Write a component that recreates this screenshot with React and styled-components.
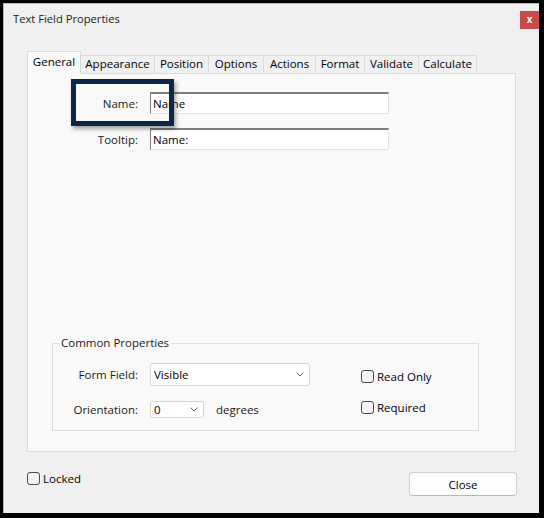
import styled, { createGlobalStyle } from 'styled-components';

const GlobalStyle = createGlobalStyle`
  html, body {
    margin: 0;
    padding: 0;
    background: #000;
  }
  body {
    font-family: "Open Sans", "Noto Sans", "Liberation Sans", sans-serif;
    font-size: 11.5px;
    color: #1a1a1a;
  }
`;

const TABS = [
  { label: 'General', width: 54 },
  { label: 'Appearance', width: 74 },
  { label: 'Position', width: 54 },
  { label: 'Options', width: 55 },
  { label: 'Actions', width: 52 },
  { label: 'Format', width: 49 },
  { label: 'Validate', width: 54 },
  { label: 'Calculate', width: 58 },
];

const Dialog = styled.div`
  margin: 3px 0 0 3px;
  width: 536px;
  height: 510px;
  background: #f0f0f0;
  box-sizing: border-box;
  border-left: 1px solid #b8b8b8;
  border-top: 1px solid #b8b8b8;
  display: flex;
  flex-direction: column;
`;

const TitleBar = styled.div`
  height: 31px;
  display: flex;
  justify-content: space-between;
  align-items: flex-start;
  padding-left: 9px;
`;

const Title = styled.span`
  font-size: 11.2px;
  line-height: 30px;
  color: #222;
`;

const CloseX = styled.button`
  margin-top: 7px;
  width: 19px;
  height: 18px;
  border: none;
  padding: 0;
  background: #c94c4c;
  color: #fff;
  font-family: "Liberation Sans", sans-serif;
  font-size: 10px;
  font-weight: bold;
  line-height: 18px;
`;

const Body = styled.div`
  padding: 16px 23px 0 23px;
`;

const TabRow = styled.div`
  display: flex;
  align-items: flex-end;
  height: 22px;
`;

const Tab = styled.div`
  width: ${({ $width }) => $width}px;
  height: ${({ $active }) => ($active ? 23 : 18)}px;
  box-sizing: border-box;
  display: flex;
  align-items: center;
  justify-content: center;
  background: ${({ $active }) => ($active ? '#f9f9f9' : '#f0f0f0')};
  border: 1px solid #dadada;
  border-bottom: none;
  border-left: ${({ $first, $active }) => ($first || $active ? '1px solid #dadada' : 'none')};
  color: #000;
  position: relative;
  z-index: ${({ $active }) => ($active ? 2 : 1)};
  margin-bottom: ${({ $active }) => ($active ? -1 : 0)}px;
  padding-bottom: ${({ $active }) => ($active ? 3 : 2)}px;
`;

const Panel = styled.div`
  position: relative;
  height: 379px;
  box-sizing: border-box;
  background: #f9f9f9;
  border: 1px solid #dadada;
  display: flex;
  flex-direction: column;
`;

const FieldGrid = styled.div`
  display: grid;
  grid-template-columns: 110px 239px;
  grid-auto-rows: 22px;
  column-gap: 12px;
  row-gap: 14px;
  padding-top: 18px;
`;

const Label = styled.label`
  display: flex;
  align-items: center;
  justify-content: flex-end;
  color: #1a1a1a;
`;

const TextInput = styled.div`
  box-sizing: border-box;
  background: #fff;
  border: 1px solid #e3e3e3;
  border-top: 2px solid #7c7c7c;
  border-left: 1px solid #7c7c7c;
  padding-left: 2px;
  display: flex;
  align-items: center;
  color: #000;
`;

const Highlight = styled.div`
  position: absolute;
  left: 43px;
  top: 5px;
  width: 103px;
  height: 47px;
  box-sizing: border-box;
  border: 5px solid #0c2646;
  box-shadow: 2px 3px 4px rgba(0, 0, 0, 0.35);
  z-index: 3;
`;

const Group = styled.fieldset`
  margin: auto 0 20px 24px;
  width: 427px;
  box-sizing: border-box;
  border: 1px solid #dcdcdc;
  padding: 12px 0 9px 6px;
  display: flex;
`;

const Legend = styled.legend`
  padding: 0 2px;
  line-height: 16px;
  color: #1a1a1a;
`;

const GroupGrid = styled.div`
  display: grid;
  grid-template-columns: 79px auto;
  grid-auto-rows: 23px;
  column-gap: 12px;
  row-gap: 12px;
`;

const Select = styled.div`
  width: ${({ $width }) => $width}px;
  box-sizing: border-box;
  background: #fff;
  border: 1px solid #d4d4d4;
  border-radius: 3px;
  display: flex;
  align-items: center;
  justify-content: space-between;
  padding: 0 5px 0 3px;
  color: #000;
`;

const Inline = styled.div`
  display: flex;
  align-items: center;
  gap: 12px;
`;

const CheckColumn = styled.div`
  display: flex;
  flex-direction: column;
  gap: 18px;
  padding-top: 7px;
  margin-left: 51px;
`;

const CheckRow = styled.label`
  display: flex;
  align-items: center;
  gap: 3px;
  height: 13px;
  color: #000;
`;

const Box = styled.span`
  width: 13px;
  height: 13px;
  box-sizing: border-box;
  border: 1px solid #4a4a4a;
  border-radius: 3px;
  background: #f3f3f3;
`;

const Footer = styled.div`
  display: flex;
  justify-content: space-between;
  align-items: flex-start;
  padding: 20px 0 0 23px;
  width: 513px;
  box-sizing: border-box;
`;

const LockedRow = styled(CheckRow)`
  margin-top: 0;
`;

const Button = styled.button`
  width: 108px;
  height: 24px;
  background: #fdfdfd;
  border: 1px solid #d0d0d0;
  border-bottom-color: #b8b8b8;
  border-radius: 4px;
  font: inherit;
  color: #000;
  padding: 0;
`;

const Chevron = () => (
  <svg width="8" height="5" viewBox="0 0 8 5">
    <path d="M0.5 0.5 L4 4 L7.5 0.5" fill="none" stroke="#6b6b6b" strokeWidth="1" />
  </svg>
);

const App = () => (
  <>
    <GlobalStyle />
    <Dialog>
      <TitleBar>
        <Title>Text Field Properties</Title>
        <CloseX>x</CloseX>
      </TitleBar>
      <Body>
        <TabRow>
          {TABS.map((t, i) => (
            <Tab key={t.label} $width={t.width} $active={i === 0} $first={i === 0}>
              {t.label}
            </Tab>
          ))}
        </TabRow>
        <Panel>
          <Highlight />
          <FieldGrid>
            <Label>Name:</Label>
            <TextInput>Name</TextInput>
            <Label>Tooltip:</Label>
            <TextInput>Name:</TextInput>
          </FieldGrid>
          <Group>
            <Legend>Common Properties</Legend>
            <GroupGrid>
              <Label>Form Field:</Label>
              <Select $width={160}>
                Visible
                <Chevron />
              </Select>
              <Label>Orientation:</Label>
              <Inline>
                <Select $width={54}>
                  0
                  <Chevron />
                </Select>
                degrees
              </Inline>
            </GroupGrid>
            <CheckColumn>
              <CheckRow>
                <Box />
                Read Only
              </CheckRow>
              <CheckRow>
                <Box />
                Required
              </CheckRow>
            </CheckColumn>
          </Group>
        </Panel>
      </Body>
      <Footer>
        <LockedRow>
          <Box />
          Locked
        </LockedRow>
        <Button>Close</Button>
      </Footer>
    </Dialog>
  </>
);

export default App;
